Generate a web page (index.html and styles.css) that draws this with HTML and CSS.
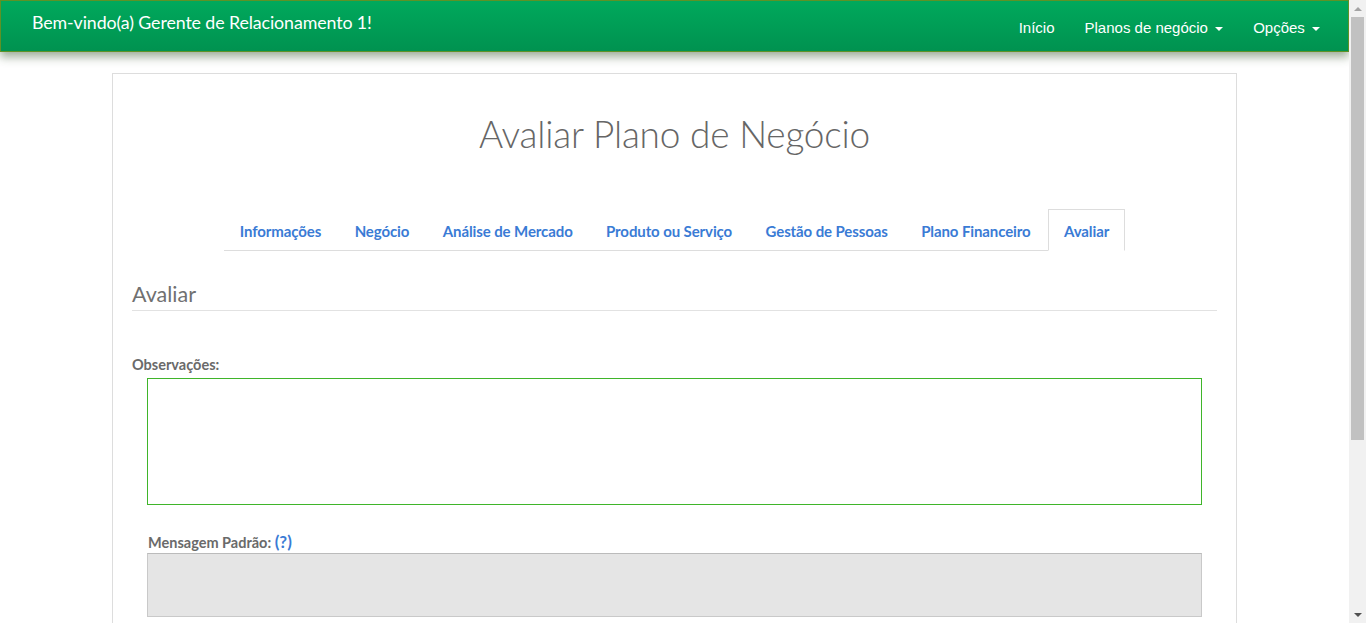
FILE: index.html
```html
<!DOCTYPE html>
<html lang="pt">
<head>
<meta charset="utf-8">
<title>Avaliar Plano de Negócio</title>
<link rel="stylesheet" href="styles.css">
</head>
<body>
<div class="window">
  <div class="page">
    <nav class="navbar">
      <div class="brand">Bem-vindo(a) Gerente de Relacionamento 1!</div>
      <ul class="menu">
        <li><a href="#">Início</a></li>
        <li><a href="#">Planos de negócio <span class="caret"></span></a></li>
        <li><a href="#">Opções <span class="caret"></span></a></li>
      </ul>
    </nav>

    <main class="container">
      <h1 class="title">Avaliar Plano de Negócio</h1>

      <ul class="tabs">
        <li><a href="#">Informações</a></li>
        <li><a href="#">Negócio</a></li>
        <li><a href="#">Análise de Mercado</a></li>
        <li><a href="#">Produto ou Serviço</a></li>
        <li><a href="#">Gestão de Pessoas</a></li>
        <li><a href="#">Plano Financeiro</a></li>
        <li class="active"><a href="#">Avaliar</a></li>
      </ul>

      <h2 class="section">Avaliar</h2>

      <div class="field">
        <label class="label">Observações:</label>
        <div class="obs" contenteditable="true"></div>
      </div>

      <div class="field inner">
        <label class="label">Mensagem Padrão: <span class="help">(?)</span></label>
        <div class="default-msg"></div>
      </div>

      <div class="spacer"></div>
    </main>
  </div>
  <div class="scrollbar">
    <div class="sb-btn"><span class="arrow up"></span></div>
    <div class="sb-track"><div class="sb-thumb"></div></div>
    <div class="sb-btn"><span class="arrow down"></span></div>
  </div>
</div>
</body>
</html>
```

FILE: styles.css
```css
html, body {
  margin: 0;
  padding: 0;
  height: 100%;
  overflow: hidden;
  background: #fff;
}

.window {
  display: flex;
  height: 100vh;
}

.page {
  flex: 1;
  min-width: 0;
  overflow: hidden;
  font-family: Lato, "Open Sans", sans-serif;
}

/* fake classic scrollbar */
.scrollbar {
  width: 17px;
  flex: none;
  display: flex;
  flex-direction: column;
  background: #f1f1f1;
}
.sb-btn {
  height: 17px;
  display: flex;
  align-items: center;
  justify-content: center;
}
.sb-track {
  flex: 1;
  padding: 0 2px;
}
.sb-thumb {
  height: 423px;
  background: #c1c1c1;
}
.arrow {
  width: 0;
  height: 0;
  border-left: 4px solid transparent;
  border-right: 4px solid transparent;
}
.arrow.up {
  border-bottom: 4px solid #a3a3a3;
}
.arrow.down {
  border-top: 4px solid #505050;
}

.navbar {
  display: flex;
  align-items: center;
  justify-content: space-between;
  box-sizing: border-box;
  height: 52px;
  border: 1px solid #5e9226;
  background: linear-gradient(#00a95c, #009250);
  box-shadow: 0 5px 9px rgba(40, 70, 30, 0.45);
  padding: 0 28px 0 31px;
  position: relative;
  z-index: 2;
}

.brand {
  color: #fff;
  font-size: 17.8px;
  font-weight: 400;
  margin-top: -8px;
  letter-spacing: -0.1px;
}

.menu {
  display: flex;
  list-style: none;
  margin: 2px 0 0;
  padding: 0;
}
.menu li a {
  display: block;
  padding: 0 15px;
  color: #fff;
  text-decoration: none;
  font-family: "Liberation Sans", Arial, sans-serif;
  font-size: 15px;
}
.menu li:last-child a {
  padding-right: 0;
}
.caret {
  display: inline-block;
  width: 0;
  height: 0;
  margin-left: 3px;
  vertical-align: middle;
  border-top: 4px solid #fff;
  border-left: 4px solid transparent;
  border-right: 4px solid transparent;
}

.container {
  width: 1125px;
  box-sizing: border-box;
  margin: 21px auto 0;
  border: 1px solid #dddddd;
  padding: 0 19px;
}

.title {
  margin: 36px 0 0;
  text-align: center;
  font-weight: 300;
  font-size: 37px;
  line-height: 48px;
  color: #666;
  letter-spacing: -0.2px;
}

.tabs {
  display: flex;
  list-style: none;
  width: fit-content;
  margin: 51px auto 0;
  padding: 0;
  border-bottom: 1px solid #dddddd;
}
.tabs li {
  margin-right: 1px;
  margin-bottom: -1px;
}
.tabs li:last-child {
  margin-right: 0;
}
.tabs li a {
  display: block;
  padding: 0 15.2px;
  height: 40px;
  line-height: 42px;
  border: 1px solid transparent;
  color: #3a7bd5;
  font-weight: 700;
  font-size: 15px;
  text-decoration: none;
  letter-spacing: -0.1px;
}
.tabs li.active a {
  border-color: #dddddd;
  border-bottom-color: #fff;
  background: #fff;
}

.section {
  margin: 31px 0 0;
  padding-bottom: 4px;
  border-bottom: 1px solid #e2e2e2;
  font-weight: 400;
  font-size: 21.5px;
  line-height: 24px;
  color: #707070;
}

.field {
  display: flex;
  flex-direction: column;
}
.label {
  font-weight: 700;
  font-size: 14.5px;
  color: #6a6a6a;
  line-height: 18px;
  margin-top: 45px;
  margin-bottom: 4px;
}
.obs {
  margin: 0 0 0 15px;
  width: 1055px;
  height: 127px;
  box-sizing: border-box;
  background: #fff;
  border: 1px solid #3fb52a;
  outline: none;
}

.field.inner {
  padding-left: 15px;
}
.field.inner .label {
  margin-top: 28px;
  margin-bottom: 1px;
  padding-left: 1px;
}
.help {
  color: #3a7bd5;
  font-size: 17px;
}
.default-msg {
  width: 1055px;
  height: 64px;
  box-sizing: border-box;
  background: #e5e5e5;
  border: 1px solid #c9c9c9;
  border-top-color: #bbb;
}

.spacer {
  height: 250px;
}
```
